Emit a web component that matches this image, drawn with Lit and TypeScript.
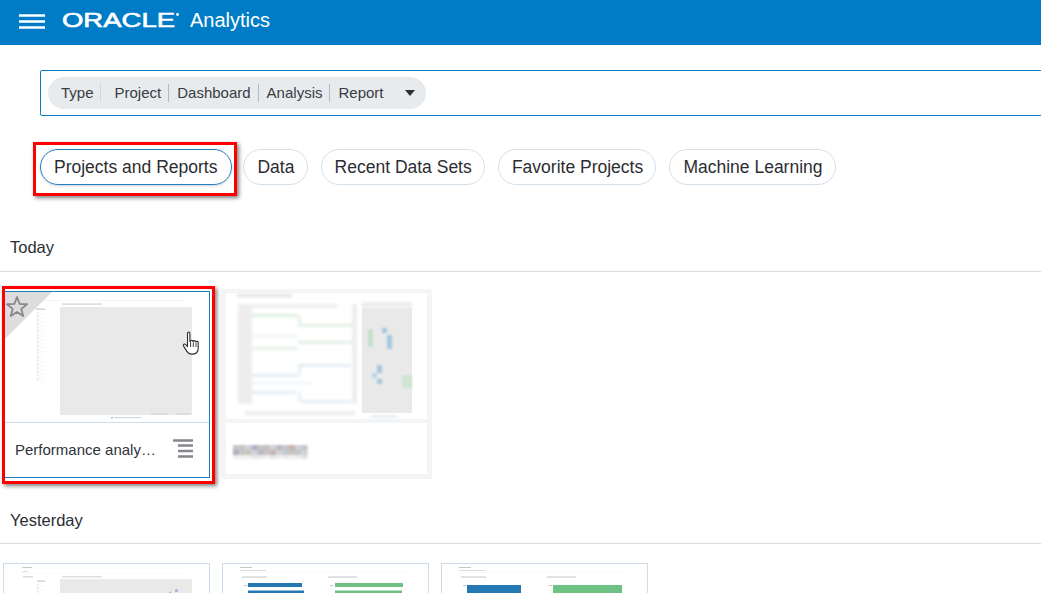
import { LitElement, html, css, svg } from "lit";
import { customElement } from "lit/decorators.js";

const NAME_TOP = ["#c4c5c2", "#bfc6c2", "#cfd0d2", "#aeadc0", "#c5c5c2", "#c2c3b8", "#d3d0d3", "#b9b8c6", "#c7c2c8", "#c5b5ae", "#d2d0d2", "#c0c8d2"];
const NAME_BOTTOM = ["#eeeeee", "#efefef", "#f1f1f1", "#e6e6e6", "#ececec", "#f0f0f0", "#e4e4e4", "#efefef", "#e9e9e9", "#f1f1f1", "#eeeeee", "#e2e2e2"];

@customElement("app-root")
export class AppRoot extends LitElement {
  static styles = css`
    :host { display: block; width: 1041px; height: 593px; overflow: hidden; background: #fff; font-family: "Liberation Sans", Arial, sans-serif; color: #2b2d33; }
    .header { height: 45px; background: #007cc7; display: flex; align-items: center; padding-left: 19px; color: #fff; }
    .burger { display: block; width: 26px; height: 15px; margin: -3px 17px 0 0; }
    .logo { display: block; width: 118px; height: 20px; margin: -5px 10px 0 0; }
    .logo text { font-family: "Liberation Sans", sans-serif; font-size: 19.5px; fill: #fff; stroke: #fff; stroke-width: .6px; }
    .product { font-size: 20px; line-height: 24px; margin-top: -5px; }
    .search { margin: 25px 0 0 40px; width: 1040px; height: 46px; box-sizing: border-box; border: 1px solid #0a7fc4; border-radius: 2px; padding: 6px 7px; }
    .facets { display: inline-flex; align-items: center; height: 32px; width: 378px; box-sizing: border-box; background: #e8ebee; border-radius: 16px; padding-left: 13px; font-size: 15px; color: #3a3c42; }
    .facet { line-height: 18px; padding-right: 7px; margin-right: 8px; border-right: 1px solid #b6babf; white-space: nowrap; }
    .facet.type { padding-right: 6px; margin-right: 14px; border-right-color: #d3d6da; }
    .facet.last { border: 0; margin-right: 0; padding-right: 0; }
    .caret { margin-left: 21px; width: 0; height: 0; border-left: 5.5px solid transparent; border-right: 5.5px solid transparent; border-top: 6px solid #2d2f34; }
    .tabs { display: flex; gap: 13px; margin: 33px 0 0 40px; }
    .tab { position: relative; height: 36px; box-sizing: border-box; border: 1px solid #d5dfe8; border-radius: 18px; padding: 0 12.2px 0 13px; font-size: 17.5px; line-height: 34px; white-space: nowrap; }
    .tab.on { border-color: #1f7fc0; box-shadow: 0 1px 3px rgba(0,0,0,.18); padding-right: 14px; margin-right: -2px; }
    .mark { position: absolute; border: 3px solid #f00; box-shadow: 2px 2px 4px rgba(0,0,0,.5); pointer-events: none; }
    .tab .mark { inset: -8px -6px -12px -8px; border-radius: 0; }
    .heading { font-size: 16.5px; line-height: 20px; padding: 0 0 13px 10px; border-bottom: 1px solid #d6dde4; }
    .today { margin-top: 52px; padding-bottom: 14px; }
    .yesterday { margin-top: 31px; }
    .cards { display: flex; gap: 12px; padding: 19px 0 0 3px; }
    .card { position: relative; width: 207px; height: 187px; box-sizing: border-box; border: 1px solid #cfdbe6; background: #fff; display: flex; flex-direction: column; flex: none; }
    .card.first { border-color: #1f7fc0 #1f7fc0 #1f7fc0 #cfdbe6; }
    .card .mark { inset: -6px -6px -7px -2px; z-index: 2; }
    .thumb { display: block; width: 205px; height: 130px; flex: none; border-bottom: 1px solid #cfdbe6; }
    .low-thumb { display: block; width: 205px; height: 59px; flex: none; }
    .foot { flex: 1; display: flex; align-items: center; justify-content: space-between; padding: 0 15px 2px 11px; font-size: 15px; color: #30323a; }
    .name { width: 141px; overflow: hidden; white-space: nowrap; text-overflow: ellipsis; }
    .menu { display: block; width: 22px; height: 20px; }
    .star { position: absolute; left: 0; top: 0; width: 50px; height: 50px; }
    .cursor { position: absolute; left: 178px; top: 39px; width: 20px; height: 26px; z-index: 1; }
    .ghost { width: 211px; height: 190px; flex: none; margin: -2px -2px 0 -1px; }
    .ghost svg { display: block; }
    .cards.low .card { height: 60px; border-bottom: 0; }
  `;

  private thumbA() {
    const rows = Array.from({ length: 19 }, (_, i) => i);
    return html`<svg class="thumb" viewBox="0 0 205 130">
      <rect x="32" y="8" width="150" height=".7" fill="#f2f2f2"/>
      <rect x="58" y="11.500" width="40" height="1.200" fill="#d2d2d2"/>
      <rect x="56" y="15" width="132" height="108" fill="#e9e9e9"/>
      <rect x="32" y="16.500" width="9" height="1.200" fill="#c4c4c4"/>
      ${rows.map((i) => svg`<rect x="33" y="${20 + i * 3.7}" width="1.500" height="1.100" fill="#cfcfcf"/><rect x="32" y="${22 + i * 3.7}" width="9" height=".6" fill="#f3f3f3"/>`)}
      <rect x="107" y="125" width="2" height="1.500" fill="#9cc4e4"/>
      <rect x="110" y="125" width="27" height="1.200" fill="#d3d8dd"/>
      <rect x="147" y="121.500" width="17" height="1" fill="#d0d0d0"/>
      <rect x="172" y="121.500" width="14" height="1" fill="#d0d0d0"/>
    </svg>`;
  }

  private ghost() {
    const g = "#ededed";
    return html`<div class="ghost"><svg width="211" height="190" viewBox="0 0 211 190">
      <defs>
        <filter id="px" x="-5%" y="-5%" width="110%" height="110%"><feGaussianBlur stdDeviation="1.600"/></filter>
        <filter id="dots" x="-20%" y="-20%" width="140%" height="140%"><feGaussianBlur stdDeviation=".9"/></filter>
      </defs>
      <rect width="211" height="190" fill="#f4f5f6"/>
      <rect x="5" y="4" width="201" height="126" fill="#fff"/>
      <rect x="5" y="134" width="201" height="51" fill="#fff"/>
      <g filter="url(#px)">
        <rect x="16" y="5" width="55" height="3" fill="#e0e0e0"/>
        <rect x="20" y="15" width="96" height="4" fill="#eeeeee"/>
        <rect x="17" y="15" width="14" height="100" fill="${g}"/>
        <rect x="131" y="15" width="5" height="100" fill="${g}"/>
        <rect x="31" y="25" width="46" height="3" fill="#dcefe0"/>
        <rect x="77" y="35" width="54" height="3" fill="#e0f0e3"/>
        <rect x="77" y="52" width="54" height="3" fill="#e0f0e3"/>
        <rect x="31" y="58" width="46" height="3" fill="#e6f2e8"/>
        <rect x="31" y="46" width="46" height="2" fill="#edf4ee"/>
        <rect x="77" y="27" width="3" height="10" fill="#e6f1e8"/>
        <rect x="77" y="75" width="52" height="3" fill="#e2edf4"/>
        <rect x="31" y="85" width="46" height="3" fill="#e2edf4"/>
        <rect x="31" y="93" width="60" height="2" fill="#eaf3f8"/>
        <rect x="31" y="102" width="44" height="3" fill="#e2edf4"/>
        <rect x="77" y="78" width="3" height="9" fill="#e6eff5"/>
        <rect x="77" y="103" width="3" height="9" fill="#e6eff5"/>
        <rect x="80" y="111" width="50" height="3" fill="#e2edf4"/>
        <rect x="24" y="122" width="110" height="5" fill="#f0f0f0"/>
      </g>
      <rect x="141" y="19" width="50" height="105" fill="#e9e9e9"/>
      <g filter="url(#px)"><rect x="141" y="13" width="50" height="6" fill="#ececec"/><rect x="150" y="126" width="26" height="3" fill="#e6ecf0"/></g>
      <g filter="url(#dots)">
        <rect x="147" y="40" width="5" height="18" fill="#c6dfca"/>
        <rect x="161" y="39" width="5" height="5" fill="#a4c8df"/>
        <rect x="166" y="46" width="5" height="14" fill="#a4c8df"/>
        <rect x="156" y="76" width="5" height="8" fill="#a4c8df"/>
        <rect x="151" y="84" width="5" height="5" fill="#bcd6e6"/>
        <rect x="156" y="90" width="5" height="5" fill="#a4c8df"/>
        <rect x="181" y="86" width="10" height="13" fill="#cfe5d3"/>
      </g>
      <g filter="url(#dots)">
        ${NAME_TOP.map((c, i) => svg`<rect x="${12 + i * 6.200}" y="156" width="6.300" height="5" fill="${c}"/><rect x="${12 + i * 6.200}" y="161" width="6.300" height="5" fill="${NAME_TOP[(i + 3) % 12]}"/><rect x="${12 + i * 6.200}" y="166" width="6.300" height="4" fill="${NAME_BOTTOM[i]}"/>`)}
      </g>
    </svg></div>`;
  }

  private lowA() {
    return html`<svg class="low-thumb" viewBox="0 0 205 59">
      <rect x="18" y="3" width="10" height="1" fill="#c8c8c8"/><rect x="18" y="7" width="6" height=".8" fill="#d5d5d5"/>
      <rect x="18" y="8.800" width="166" height=".6" fill="#f2f2f2"/>
      <rect x="19" y="12.300" width="10" height="1" fill="#c8c8c8"/>
      <rect x="58" y="12.300" width="40" height="1.100" fill="#d2d2d2"/>
      <rect x="33" y="16.500" width="8" height="1.200" fill="#c8c8c8"/>
      <rect x="56" y="15" width="132" height="44" fill="#e9e9e9"/>
      ${[0, 1, 2, 3, 4, 5, 6, 7, 8, 9].map((i) => svg`<rect x="33" y="${20 + i * 3.700}" width="1.500" height="1.100" fill="#cfcfcf"/><rect x="32" y="${22 + i * 3.700}" width="9" height=".6" fill="#f3f3f3"/>`)}
      <rect x="165" y="27.500" width="2.500" height="2.500" rx="1.200" fill="#bdb7e0"/><rect x="171" y="25" width="3" height="3" rx="1.500" fill="#b0a9da"/>
    </svg>`;
  }

  private lowB(tall: boolean) {
    return html`<svg class="low-thumb" viewBox="0 0 205 59">
      <rect x="17" y="3" width="12" height="1" fill="#c6c6c6"/><rect x="17" y="6" width="26" height=".8" fill="#d5d5d5"/>
      <rect x="17" y="8.300" width="170" height=".5" fill="#f4f4f4"/>
      <rect x="19" y="12.500" width="25" height="1.100" fill="#cbcbcb"/><rect x="105" y="12.500" width="29" height="1.100" fill="#cbcbcb"/>
      <rect x="21" y="21" width="3" height="1.100" fill="#c6c6c6"/><rect x="107" y="21" width="3" height="1.100" fill="#c6c6c6"/>
      ${tall
        ? svg`<rect x="25" y="21" width="54" height="38" fill="#2479b2"/><rect x="111" y="21" width="69" height="38" fill="#6cc183"/>`
        : svg`<rect x="25" y="19" width="54" height="4" fill="#2479b2"/><rect x="112" y="19" width="68" height="4" fill="#6cc183"/>
              <rect x="25" y="26.500" width="56" height="5" fill="#2479b2"/><rect x="112" y="26.500" width="67" height="5" fill="#6cc183"/>`}
    </svg>`;
  }

  render() {
    return html`
      <div class="header">
        <svg class="burger" viewBox="0 0 26 15"><path d="M0 1.500h26M0 7.500h26M0 13.500h26" stroke="#fff" stroke-width="2.400"/></svg>
        <svg class="logo" viewBox="0 0 118 20">
          <text x="0" y="17" textLength="113" lengthAdjust="spacingAndGlyphs">ORACLE</text>
          <circle cx="115.500" cy="4.500" r="1.400" fill="#fff"/>
        </svg>
        <span class="product">Analytics</span>
      </div>
      <div class="search">
        <div class="facets">
          <span class="facet type">Type</span>
          <span class="facet">Project</span>
          <span class="facet">Dashboard</span>
          <span class="facet">Analysis</span>
          <span class="facet last">Report</span>
          <span class="caret"></span>
        </div>
      </div>
      <div class="tabs">
        <div class="tab on">Projects and Reports<span class="mark"></span></div>
        <div class="tab">Data</div>
        <div class="tab">Recent Data Sets</div>
        <div class="tab">Favorite Projects</div>
        <div class="tab">Machine Learning</div>
      </div>
      <div class="heading today">Today</div>
      <div class="cards">
        <div class="card first">
          ${this.thumbA()}
          <svg class="star" viewBox="0 0 50 50">
            <path d="M0 0H48L0 48Z" fill="#dddddd"/>
            <path d="M13 5L15.600 11.900 23 12.250 17.300 16.900 19.200 24 13 20 6.800 24 8.700 16.900 3 12.250 10.400 11.900Z" fill="none" stroke="#87878c" stroke-width="1.800" stroke-linejoin="round"/>
          </svg>
          <svg class="cursor" viewBox="0 0 20 26">
            <path d="M5.500 2.200c0-1.600 2.400-1.600 2.400 0v8.300l.6-.1c0-1.500 2.300-1.500 2.300 0l.5.2c.2-1.300 2.200-1.300 2.300.1l.4.300c.4-1 2.200-.8 2.200.6v5.500c0 3.500-1.700 6-5.300 6h-1.700c-2.100 0-3.300-1-4.300-2.700l-3.300-5.300c-.9-1.500.9-2.800 2.100-1.500l1.800 2z" fill="#fff" stroke="#2a2d33" stroke-width="1.100" stroke-linejoin="round"/>
            <path d="M8.600 11v5M11.300 11.500v4.500M14 12v4" stroke="#2a2d33" stroke-width=".9"/>
          </svg>
          <div class="foot">
            <span class="name">Performance analysis</span>
            <svg class="menu" viewBox="0 0 22 20"><path d="M1 1.500h20M6 6.500h15M6 12h15M6 17.500h15" stroke="#85878a" stroke-width="2.400"/></svg>
          </div>
          <span class="mark"></span>
        </div>
        ${this.ghost()}
      </div>
      <div class="heading yesterday">Yesterday</div>
      <div class="cards low">
        <div class="card">${this.lowA()}</div>
        <div class="card">${this.lowB(false)}</div>
        <div class="card">${this.lowB(true)}</div>
      </div>
    `;
  }
}
